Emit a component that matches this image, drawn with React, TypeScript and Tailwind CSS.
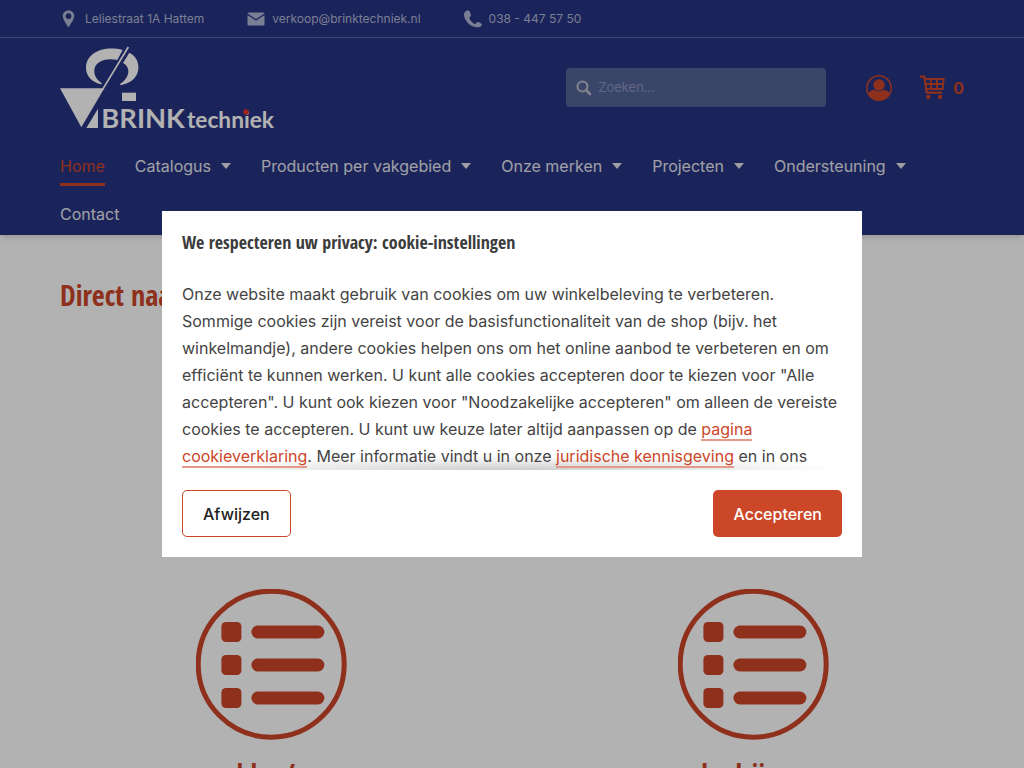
import type { ReactNode } from "react";

const menu = [
    { label: "Home", active: true },
    { label: "Catalogus", sub: true },
    { label: "Producten per vakgebied", sub: true },
    { label: "Onze merken", sub: true },
    { label: "Projecten", sub: true },
    { label: "Ondersteuning", sub: true },
    { label: "Contact" },
];

const PinIcon = () => (
    <svg viewBox="0 0 18 18" className="size-[18px]" fill="currentColor">
        <path fillRule="evenodd" d="M8.5 0.5C5.2 0.5 2.8 2.8 2.8 6C2.8 9.5 6.5 14 8.5 17.5C10.5 14 14.2 9.5 14.2 6C14.2 2.8 11.8 0.5 8.5 0.5ZM8.5 3.2A2.9 2.9 0 1 1 8.5 9A2.9 2.9 0 1 1 8.5 3.2Z" />
    </svg>
);

const MailIcon = () => (
    <svg viewBox="0 0 18 18" className="size-[18px]" fill="currentColor">
        <path d="M1.5 2.5H16.5Q17.3 2.5 17.3 3.5L9 9.2L0.7 3.5Q0.7 2.5 1.5 2.5Z" />
        <path d="M0.5 5L9 10.7L17.5 5V14.3Q17.5 15.5 16.3 15.5H1.7Q0.5 15.5 0.5 14.3Z" />
    </svg>
);

const PhoneIcon = () => (
    <svg viewBox="0 0 54 52" className="size-[18px]" fill="currentColor">
        <path d="M12 0C5 1 0 6 0 14C2 34 22 51 40 51C47 51 54 46 54 43C54 40 45 35 41 35C38 35 37 40 34 41C29 41 17 30 16 23C17 19 21 18 21 15C20 9 16 0 12 0Z" />
    </svg>
);

const Logo = () => (
    <svg viewBox="60 141 642 243" className="h-[81px] w-[214px] overflow-visible" fill="#fff" role="img" aria-label="BRINKtechniek">
        <path d="M60 265H193L124 382Z" />
        <path d="M265 141L188 268" stroke="#fff" strokeWidth="5" />
        <path d="M174 326V384H139Z" />
        <path d="M246 278H288V303H246Z" />
        <path d="M248 150C190 135 138 160 138 203C138 228 155 245 182 253L186 250C168 238 162 225 163 210C165 185 195 172 232 180Z" />
        <path d="M268 158C290 168 297 190 295 208C292 235 270 250 242 256L240 252C258 240 266 225 265 212C264 200 258 194 249 189Z" />
        <text x="184" y="384" fontSize="82" className="font-['Lato'] font-bold">BRINK</text>
        <text x="441" y="384" fontSize="68" className="font-['Lato'] font-bold">techniek</text>
        <circle cx="618" cy="336" r="8" fill="#e5322b" />
    </svg>
);

const UserIcon = () => (
    <svg viewBox="0 0 78 78" className="size-[26px]" fill="currentColor">
        <circle cx="39" cy="39" r="36.5" fill="none" stroke="currentColor" strokeWidth="4.5" />
        <circle cx="39" cy="30" r="17" />
        <path d="M7 60C8 50 16 45 25 44Q39 54 53 44C62 45 70 50 71 60C62 71 50 77 39 77C28 77 16 71 7 60Z" />
    </svg>
);

const CartIcon = () => (
    <svg viewBox="0 0 75 75" className="size-[25px]" fill="none" stroke="currentColor" strokeWidth="6.5">
        <path d="M0 5H13L20 53H66" />
        <path d="M14 12H71L68 42H19M16 27H69M32 12L34 42M51 12V42" strokeWidth="5.5" />
        <circle cx="25" cy="66" r="6.5" fill="currentColor" stroke="none" />
        <circle cx="60" cy="66" r="6.5" fill="currentColor" stroke="none" />
    </svg>
);

const SearchIcon = () => (
    <svg viewBox="0 0 16 16" className="size-4" fill="none" stroke="currentColor" strokeWidth="2.2">
        <circle cx="6.5" cy="6.5" r="5" />
        <path d="M10 10L14 14" strokeWidth="2.6" strokeLinecap="round" />
    </svg>
);

const ListIcon = () => (
    <svg viewBox="0 0 151 151" className="size-[151px]" fill="currentColor">
        <circle cx="75.2" cy="75.2" r="73" fill="none" stroke="currentColor" strokeWidth="5" />
        {[33, 66, 99].map((y) => (
            <g key={y}>
                <rect x="25.4" y={y} width="20" height="20" rx="4.5" />
                <rect x="55.4" y={y + 3.5} width="73" height="13" rx="6.5" />
            </g>
        ))}
    </svg>
);

const ContactItem = ({ icon, href, children }: { icon: ReactNode; href: string; children: ReactNode }) => (
    <a href={href} className="flex items-center gap-[7px]">
        {icon}
        <span>{children}</span>
    </a>
);

const TextLink = ({ children }: { children: ReactNode }) => (
    <a href="#" className="border-b-2 border-[#e49a8b] text-[#cc4628]">{children}</a>
);

const Header = () => (
    <header className="bg-[#273482] text-white shadow-md">
        <div className="border-b border-[#5b649f]">
            <div className="mx-auto flex h-[37px] max-w-[1200px] items-center gap-[43px] px-[60px] text-xs text-[#b1b6d3]">
                <ContactItem href="#" icon={<PinIcon />}>Leliestraat 1A Hattem</ContactItem>
                <ContactItem href="mailto:verkoop@brinktechniek.nl" icon={<MailIcon />}>verkoop@brinktechniek.nl</ContactItem>
                <ContactItem href="tel:0384475750" icon={<PhoneIcon />}>038 - 447 57 50</ContactItem>
            </div>
        </div>
        <div className="mx-auto max-w-[1200px] px-[60px] pt-[9px]">
            <div className="flex items-center">
                <a href="#"><Logo /></a>
                <label className="ml-auto flex h-[39px] w-[260px] items-center gap-1.5 rounded bg-[#536399] px-2.5 text-[#b9bcc9]">
                    <SearchIcon />
                    <input type="search" aria-label="Zoeken" placeholder="Zoeken..." className="min-w-0 flex-1 bg-transparent text-[13px] outline-none placeholder:text-[#8d94be]" />
                </label>
                <button type="button" aria-label="Account" className="ml-10 text-[#cc4628]"><UserIcon /></button>
                <button type="button" aria-label="Winkelwagen" className="ml-7 flex items-center gap-2 text-[#cc4628]">
                    <CartIcon />
                    <span className="text-base font-bold">0</span>
                </button>
            </div>
            <nav className="mt-[19px] flex flex-wrap gap-x-[30px] gap-y-[9px] pb-px">
                {menu.map((item) => (
                    <a
                        key={item.label}
                        href="#"
                        className={`flex h-[39px] items-center gap-2.5 border-t border-b-3 border-t-transparent text-base ${item.active ? "border-b-[#cc4628] text-[#cc4628]" : "border-b-transparent text-[#e4e5ee]"}`}
                    >
                        {item.label}
                        {item.sub && (
                            <svg viewBox="0 0 10 6" className="h-1.5 w-2.5" fill="currentColor">
                                <path d="M0 0H10L5 6Z" />
                            </svg>
                        )}
                    </a>
                ))}
            </nav>
        </div>
    </header>
);

const CookieDialog = () => (
    <div className="fixed inset-0 flex items-center justify-center bg-black/30">
        <div role="dialog" aria-labelledby="cookie-title" className="w-full max-w-[700px] bg-white">
            <div className="relative px-5 pt-[19px]">
                <h3 id="cookie-title" className="mb-[27px] font-['Open_Sans_Condensed'] text-lg leading-6 font-bold text-[#3c3c3c]">
                    We respecteren uw privacy: cookie-instellingen
                </h3>
                <div className="pointer-events-none absolute inset-x-5 bottom-0 h-3.5 bg-[radial-gradient(farthest-side_at_50%_100%,rgba(0,0,0,0.2),transparent)]" />
                <p className="relative text-base leading-[27px] text-[#444]">
                    Onze website maakt gebruik van cookies om uw winkelbeleving te verbeteren. Sommige cookies zijn vereist voor de basisfunctionaliteit van de shop (bijv. het winkelmandje), andere cookies helpen ons om het online aanbod te verbeteren en om efficiënt te kunnen werken. U kunt alle cookies accepteren door te kiezen voor "Alle accepteren". U kunt ook kiezen voor "Noodzakelijke accepteren" om alleen de vereiste cookies te accepteren. U kunt uw keuze later altijd aanpassen op de <TextLink>pagina cookieverklaring</TextLink>. Meer informatie vindt u in onze <TextLink>juridische kennisgeving</TextLink> en in ons
                </p>
            </div>
            <div className="flex justify-between p-5 text-base font-medium">
                <button type="button" className="h-[47px] rounded-[5px] border border-[#cc4628] px-5 text-[#222]">Afwijzen</button>
                <button type="button" className="h-[47px] rounded-[5px] bg-[#cc4628] px-5 text-white">Accepteren</button>
            </div>
        </div>
    </div>
);

const App = () => {
    return (
        <div className="h-screen overflow-hidden bg-white font-['Inter',sans-serif]">
            <Header />
            <main className="mx-auto max-w-[1200px] px-[60px] pt-10 font-['Open_Sans_Condensed'] text-[28px] leading-10 font-bold text-[#cc4628]">
                <h2>Direct naar</h2>
                <div className="mt-[274px] grid grid-cols-2 gap-[60px]">
                    {["blog/s", "bedrijven"].map((title) => (
                        <a key={title} href="#" className="flex flex-col items-center gap-3.5">
                            <ListIcon />
                            <h3>{title}</h3>
                        </a>
                    ))}
                </div>
            </main>
            <CookieDialog />
        </div>
    );
};

export default App;
